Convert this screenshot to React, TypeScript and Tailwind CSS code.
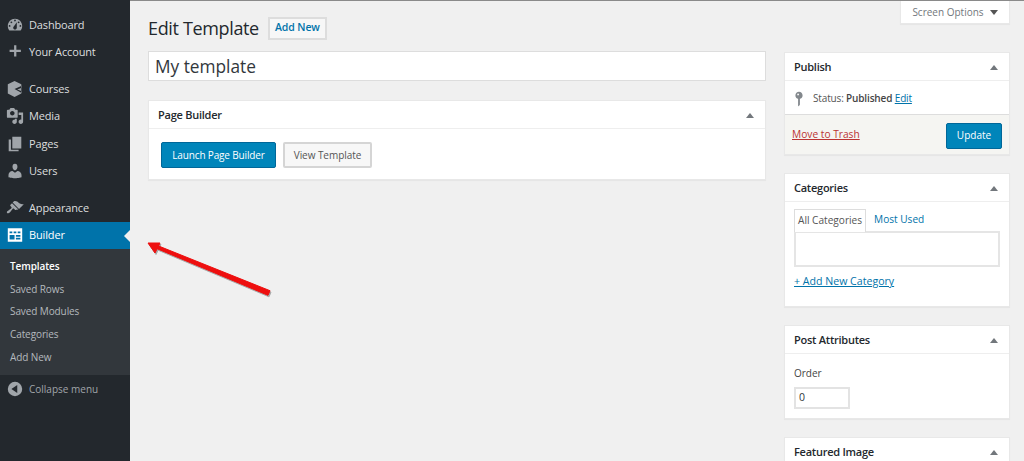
import React from "react";

type IconProps = { className?: string };

const DashboardIcon = ({ className }: IconProps) => (
  <svg viewBox="0 0 20 20" className={className} fill="currentColor">
    <path
      fillRule="evenodd"
      d="M3.76 16h12.48c1.1-1.37 1.76-3.11 1.76-5 0-4.42-3.58-8-8-8s-8 3.58-8 8c0 1.89.66 3.63 1.76 5zM10 4c.55 0 1 .45 1 1s-.45 1-1 1-1-.45-1-1 .45-1 1-1zM6 6c.55 0 1 .45 1 1s-.45 1-1 1-1-.45-1-1 .45-1 1-1zm8 0c.55 0 1 .45 1 1s-.45 1-1 1-1-.45-1-1 .45-1 1-1zm-5.37 5.55L12 7v6c0 1.1-.9 2-2 2s-2-.9-2-2c0-.57.24-1.08.63-1.45zM4 10c.55 0 1 .45 1 1s-.45 1-1 1-1-.45-1-1 .45-1 1-1zm12 0c.55 0 1 .45 1 1s-.45 1-1 1-1-.45-1-1 .45-1 1-1z"
    />
  </svg>
);

const PlusIcon = ({ className }: IconProps) => (
  <svg viewBox="0 0 20 20" className={className} fill="currentColor">
    <path d="M16.500 7.500v2.500h-5v5H9v-5H4V7.500h5V2.500h2.500v5z" />
  </svg>
);

const CoursesIcon = ({ className }: IconProps) => (
  <svg viewBox="0 0 20 20" className={className} fill="currentColor">
    <path
      fillRule="evenodd"
      d="M9.500 1l7.500 3.600v10.400l-7.500 4-7.500-4V4.600zM9.500 10l8-3.500v2.200l-5 1.800 5 1.900v2z"
    />
  </svg>
);

const MediaIcon = ({ className }: IconProps) => (
  <svg viewBox="0 0 20 20" className={className} fill="currentColor">
    <path
      fillRule="evenodd"
      d="M13 11V4c0-.55-.45-1-1-1h-1.670L9 1H5L3.670 3H2c-.55 0-1 .45-1 1v7c0 .55.45 1 1 1h10c.55 0 1-.45 1-1zM7 4.500c1.380 0 2.500 1.120 2.500 2.500S8.380 9.500 7 9.500 4.500 8.380 4.500 7 5.620 4.500 7 4.500zM14 6h5v10.500c0 1.380-1.120 2.500-2.500 2.500S14 17.880 14 16.500s1.120-2.500 2.500-2.500c.17 0 .34.02.5.05V9h-3V6zm-4 8.050V13h2v3.500c0 1.380-1.120 2.500-2.500 2.500S7 17.880 7 16.500 8.120 14 9.500 14c.17 0 .34.02.5.05z"
    />
  </svg>
);

const PagesIcon = ({ className }: IconProps) => (
  <svg viewBox="0 0 20 20" className={className} fill="currentColor">
    <path d="M7 2h10v13H7zM5.500 5v11.500H14V18H3V5z" />
  </svg>
);

const UsersIcon = ({ className }: IconProps) => (
  <svg viewBox="0 0 20 20" className={className} fill="currentColor">
    <path d="M10 9.250c-2.270 0-2.730-3.440-2.730-3.440C7 4.020 7.820 2 9.970 2c2.160 0 2.980 2.020 2.710 3.810 0 0-.41 3.440-2.680 3.440zm0 2.570L12.720 10c2.390 0 4.520 2.330 4.520 4.530v2.490s-3.650 1.130-7.240 1.130c-3.650 0-7.240-1.130-7.240-1.130v-2.490c0-2.250 1.940-4.480 4.470-4.480z" />
  </svg>
);

const BrushIcon = ({ className }: IconProps) => (
  <svg viewBox="0 0 20 20" className={className} fill="currentColor">
    <path d="M14.480 11.060L7.410 3.990l1.500-1.500c.5-.56 2.300-.47 3.510.32 1.210.8 1.430 1.280 2.910 2.100 1.180.64 2.450 1.260 4.450.85zm-.71.71L6.700 4.700 4.930 6.470c-.39.39-.39 1.020 0 1.410l1.060 1.060c.39.39.39 1.030 0 1.420-.6.6-1.430 1.110-2.210 1.690-.35.26-.7.53-1.010.84C1.430 13.230.4 14.840 1.190 15.630c.79.79 2.400-.24 3.740-1.580.31-.31.58-.66.84-1.010.58-.78 1.090-1.610 1.690-2.210.39-.39 1.020-.39 1.410 0l1.060 1.060c.39.39 1.020.39 1.410 0z" />
  </svg>
);

const TableIcon = ({ className }: IconProps) => (
  <svg viewBox="0 0 20 20" className={className} fill="currentColor">
    <path
      fillRule="evenodd"
      d="M2 2.500h16v15H2zM4 6v2h3V6zm4.500 0v2h3V6zM13 6v2h3V6zM4 10v5h5.500v-5zm7 0v2h5v-2zm0 3v2h5v-2z"
    />
  </svg>
);

const CollapseIcon = ({ className }: IconProps) => (
  <svg viewBox="0 0 20 20" className={className} fill="currentColor">
    <path
      fillRule="evenodd"
      d="M10 2a8 8 0 1 0 0 16 8 8 0 0 0 0-16zM12.500 5.500v9L6 10z"
    />
  </svg>
);

const PinIcon = ({ className }: IconProps) => (
  <svg viewBox="0 0 20 20" className={className} fill="currentColor">
    <path
      fillRule="evenodd"
      d="M14 6c0 1.860-1.280 3.410-3 3.860V16c0 1-2 2-2 2V9.860c-1.720-.45-3-2-3-3.860 0-2.210 1.790-4 4-4s4 1.790 4 4zM8 5c0 .55.45 1 1 1s1-.45 1-1-.45-1-1-1-1 .45-1 1z"
    />
  </svg>
);

const menuGroups = [
  [
    { label: "Dashboard", Icon: DashboardIcon },
    { label: "Your Account", Icon: PlusIcon },
  ],
  [
    { label: "Courses", Icon: CoursesIcon },
    { label: "Media", Icon: MediaIcon },
    { label: "Pages", Icon: PagesIcon },
    { label: "Users", Icon: UsersIcon },
  ],
  [{ label: "Appearance", Icon: BrushIcon }],
];

const subItems = ["Saved Rows", "Saved Modules", "Categories", "Add New"];

const Sidebar = () => (
  <aside className="w-[130px] shrink-0 bg-[#23282d] pt-[11px] text-[11px] tracking-[-0.15px] text-[#dcdedf]">
    {menuGroups.map((group, i) => (
      <div key={i} className="mb-[9px]">
        {group.map(({ label, Icon }) => (
          <div key={label} className="flex h-[27.500px] items-center">
            <Icon className="ml-[6px] mr-[5px] h-[18px] w-[18px] text-[#a0a5aa]" />
            <span>{label}</span>
          </div>
        ))}
      </div>
    ))}
    <div className="relative -mt-[9px] flex h-[27.500px] items-center bg-[#0073aa] text-white">
      <TableIcon className="ml-[6px] mr-[5px] h-[18px] w-[18px]" />
      <span>Builder</span>
      <div className="absolute right-0 top-[8px] border-y-[6px] border-r-[6px] border-y-transparent border-r-[#f0f0f0]" />
    </div>
    <div className="flex h-[126px] flex-col bg-[#32373c] pl-[10px] pt-[6px] text-[10px] tracking-[-0.1px] text-[#b4b9be]">
      <div className="flex h-[22.800px] items-center font-semibold text-white">Templates</div>
      {subItems.map((item) => (
        <div key={item} className="flex h-[22.800px] items-center">
          {item}
        </div>
      ))}
    </div>
    <div className="flex h-[28px] items-center text-[10px] tracking-normal text-[#a0a5aa]">
      <CollapseIcon className="ml-[6px] mr-[5px] h-[18px] w-[18px]" />
      <span>Collapse menu</span>
    </div>
  </aside>
);

const Box = ({
  title,
  className,
  children,
}: {
  title: string;
  className?: string;
  children?: React.ReactNode;
}) => (
  <section className={`shrink-0 border border-[#e8e8e8] bg-white shadow-[0_1px_1px_rgba(0,0,0,0.04)] ${className ?? ""}`}>
    <div className="flex h-[28px] items-center justify-between border-b border-[#eeeeee] pl-[9px] pr-[11px] pt-[1px]">
      <h2 className="text-[11px] font-semibold tracking-[-0.25px] text-[#23282d]">{title}</h2>
      <div className="border-x-[4px] border-b-[5px] border-x-transparent border-b-[#72777c]" />
    </div>
    {children}
  </section>
);

const Arrow = () => (
  <svg
    className="pointer-events-none absolute left-[140px] top-[235px]"
    width="140"
    height="70"
    viewBox="0 0 140 70"
  >
    <g fill="#555" stroke="#555" strokeWidth="1" strokeLinejoin="round" opacity="0.45" transform="translate(1 1.500)">
      <path d="M17.600 10.600 L130 55.700 L128 60.300 L16.400 13.400 Z" />
      <path d="M8 8 L20 8 L15 18 Z" />
    </g>
    <g fill="#ee0f0f" stroke="#ee0f0f" strokeWidth="1" strokeLinejoin="round">
      <path d="M17.600 10.600 L130 55.700 L128 60.300 L16.400 13.400 Z" />
      <path d="M8 8 L20 8 L15 18 Z" />
    </g>
  </svg>
);

export default function App() {
  return (
    <div
      className="relative flex h-[461px] w-[1024px] overflow-hidden bg-[#f0f0f0] text-[#444] text-[11px]"
      style={{ fontFamily: '"Open Sans", sans-serif' }}
    >
      <Sidebar />
      <main className="relative flex min-w-0 flex-1 gap-[18px] border-t border-[#8a8a8a] pl-[18px] pr-[14px]">
        <div className="absolute right-[14px] top-0 flex h-[23px] w-[110px] items-center justify-center gap-[6px] border-x border-b border-[#e8e8e8] bg-white text-[10px] text-[#72777c] shadow-[0_1px_1px_rgba(0,0,0,0.04)]">
          Screen Options
          <div className="border-x-[4px] border-t-[5px] border-x-transparent border-t-[#555]" />
        </div>

        <div className="w-[618px] shrink-0">
          <div className="flex h-[50px] items-center gap-[9px] pb-[4px] pt-[8px]">
            <h1 className="text-[18px] tracking-[-0.35px] text-[#23282d]">Edit Template</h1>
            <div className="flex h-[23px] w-[59px] items-center justify-center border-2 border-[#dddddd] bg-[#f7f7f7] text-[10.500px] font-semibold tracking-[-0.1px] text-[#0073aa]">
              Add New
            </div>
          </div>
          <div className="flex h-[30px] items-center border border-[#dddddd] bg-white pl-[6px] pt-[2px] text-[17.300px] text-[#32373c]">
            My template
          </div>
          <Box title="Page Builder" className="mt-[19px] h-[80px]">
            <div className="flex gap-[7px] pl-[12px] pt-[13px]">
              <div className="flex h-[26px] w-[115px] items-center justify-center rounded-[2px] border border-[#006799] bg-[#0085ba] text-[10px] tracking-[-0.15px] text-white">
                Launch Page Builder
              </div>
              <div className="flex h-[26px] w-[89px] items-center justify-center rounded-[2px] border-2 border-[#d5d5d5] bg-[#f7f7f7] text-[10px] tracking-[-0.05px] text-[#555]">
                View Template
              </div>
            </div>
          </Box>
        </div>

        <div className="flex w-[226px] shrink-0 flex-col gap-[18px] pt-[51px]">
          <Box title="Publish">
            <div className="flex h-[33px] items-center pl-[5px] pt-[2px] text-[10px] tracking-[-0.15px] text-[#555]">
              <PinIcon className="mr-[5px] h-[18px] w-[18px] text-[#82878c]" />
              Status:&nbsp;<b className="font-semibold text-[#444]">Published</b>&nbsp;
              <span className="text-[#0073aa] underline">Edit</span>
            </div>
            <div className="flex h-[40px] items-center justify-between border-t border-[#dddddd] bg-[#f5f5f2] pl-[7px] pr-[7px]">
              <span className="text-[10.200px] text-[#b33] underline">Move to Trash</span>
              <div className="mt-[2px] flex h-[26px] w-[56px] items-center justify-center rounded-[2px] border border-[#006799] bg-[#0085ba] text-[10px] text-white">
                Update
              </div>
            </div>
          </Box>

          <Box title="Categories" className="h-[134px]">
            <div className="px-[9px] pt-[7px]">
              <div className="relative z-10 flex text-[10.100px]">
                <div className="flex h-[23px] items-center border-x border-t border-[#dddddd] bg-white px-[3px] text-[#555]">
                  All Categories
                </div>
                <div className="flex h-[22px] items-center pl-[8px] text-[#0073aa]">Most Used</div>
              </div>
              <div className="-mt-px h-[36px] border-2 border-[#e5e5e5] bg-white" />
              <div className="mt-[7px] text-[10.600px] text-[#0073aa] underline">+ Add New Category</div>
            </div>
          </Box>

          <Box title="Post Attributes" className="h-[94px]">
            <div className="px-[9px] pt-[12px]">
              <div className="text-[10px] text-[#444]">Order</div>
              <div className="mt-[6px] flex h-[22px] w-[56px] items-center border-2 border-[#e3e3e3] bg-white pl-[3px] text-[10.500px] text-[#32373c]">
                0
              </div>
            </div>
          </Box>

          <Box title="Featured Image" className="h-[60px]" />
        </div>
      </main>
      <Arrow />
    </div>
  );
}
